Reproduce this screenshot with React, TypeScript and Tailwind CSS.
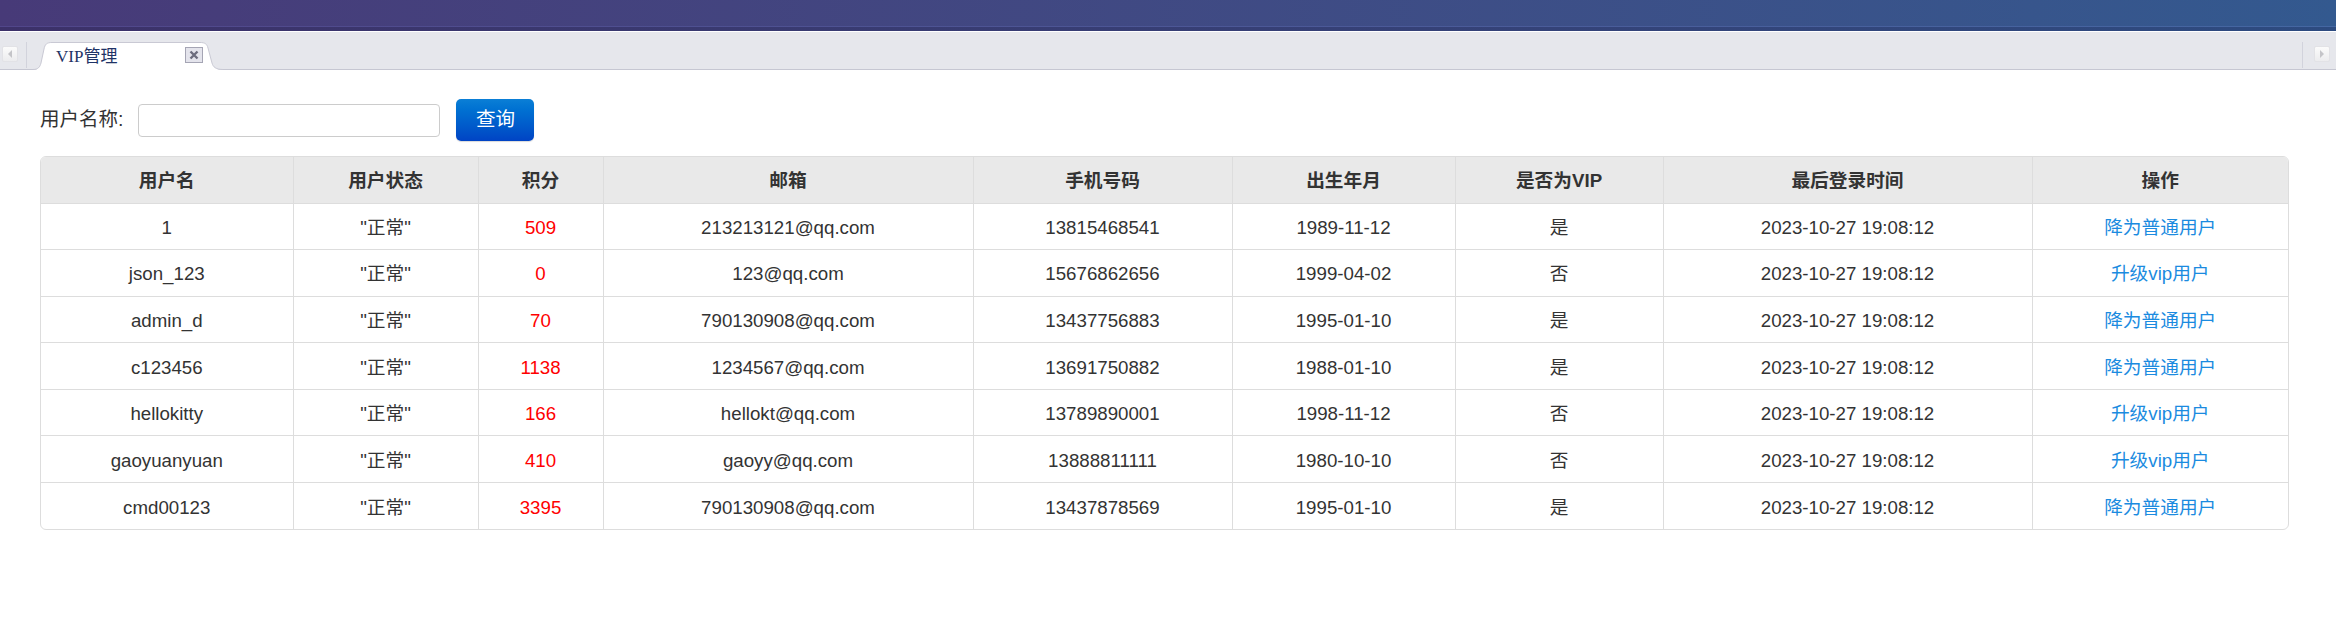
import React from "react"

interface VipUser {
  name: string
  status: string
  points: number
  email: string
  phone: string
  birth: string
  vip: boolean
  lastLogin: string
}

const users: VipUser[] = [
  { name: "1", status: "\"正常\"", points: 509, email: "213213121@qq.com", phone: "13815468541", birth: "1989-11-12", vip: true, lastLogin: "2023-10-27 19:08:12" },
  { name: "json_123", status: "\"正常\"", points: 0, email: "123@qq.com", phone: "15676862656", birth: "1999-04-02", vip: false, lastLogin: "2023-10-27 19:08:12" },
  { name: "admin_d", status: "\"正常\"", points: 70, email: "790130908@qq.com", phone: "13437756883", birth: "1995-01-10", vip: true, lastLogin: "2023-10-27 19:08:12" },
  { name: "c123456", status: "\"正常\"", points: 1138, email: "1234567@qq.com", phone: "13691750882", birth: "1988-01-10", vip: true, lastLogin: "2023-10-27 19:08:12" },
  { name: "hellokitty", status: "\"正常\"", points: 166, email: "hellokt@qq.com", phone: "13789890001", birth: "1998-11-12", vip: false, lastLogin: "2023-10-27 19:08:12" },
  { name: "gaoyuanyuan", status: "\"正常\"", points: 410, email: "gaoyy@qq.com", phone: "13888811111", birth: "1980-10-10", vip: false, lastLogin: "2023-10-27 19:08:12" },
  { name: "cmd00123", status: "\"正常\"", points: 3395, email: "790130908@qq.com", phone: "13437878569", birth: "1995-01-10", vip: true, lastLogin: "2023-10-27 19:08:12" },
]

const headers = ["用户名", "用户状态", "积分", "邮箱", "手机号码", "出生年月", "是否为VIP", "最后登录时间", "操作"]
const colWidths = [252, 185, 125, 370, 259, 223, 208, 369, 256]

function ScrollArrow({ dir }: { dir: "left" | "right" }) {
  return (
    <div className="flex h-[16px] w-[16px] items-center justify-center rounded-[2px] border border-[#e2e2e6] bg-gradient-to-b from-[#fbfbfb] to-[#ececee]">
      <svg width="8" height="10" viewBox="0 0 8 10">
        {dir === "left" ? (
          <path d="M6 1 L2 5 L6 9 Z" fill="#c4c4c8" />
        ) : (
          <path d="M2 1 L6 5 L2 9 Z" fill="#c4c4c8" />
        )}
      </svg>
    </div>
  )
}

function Tab() {
  return (
    <div className="relative -mb-px ml-[6px] flex h-[28px] w-[190px] items-center">
      <svg className="absolute inset-0" width="190" height="28" viewBox="0 0 190 28">
        <path
          d="M0 28 C5 28 7 25 8 21 L11 7 C12 2 14 0.5 19 0.5 L167 0.5 C172 0.5 174 2 175 6 L179 21 C180 25 183 28 190 28 Z"
          fill="#ffffff"
        />
        <path
          d="M0 27.5 C5 27.5 7 25 8 21 L11 7 C12 2 14 0.5 19 0.5 L167 0.5 C172 0.5 174 2 175 6 L179 21 C180 25 183 27.5 190 27.5"
          fill="none"
          stroke="#c9c9d4"
        />
      </svg>
      <span className="relative pl-[23px] pt-[1px] font-['Liberation_Serif','Noto_Sans_CJK_SC',serif] text-[17px] text-[#1f3366]">
        VIP管理
      </span>
      <div className="relative ml-auto mr-[20px] -mt-[2px] flex h-[16px] w-[18px] items-center justify-center border border-[#a5a5b4] bg-[#e4e4ec]">
        <svg width="10" height="10" viewBox="0 0 10 10">
          <path d="M1.5 1.5 L8.5 8.5 M8.5 1.5 L1.5 8.5" stroke="#6d6d7e" strokeWidth="2.4" />
        </svg>
      </div>
    </div>
  )
}

export default function App() {
  return (
    <div className="min-h-screen bg-white font-['Liberation_Sans','Noto_Sans_CJK_SC',sans-serif] text-[#333]">
      <div className="h-[26px] bg-gradient-to-r from-[#473a78] to-[#33598f]" />
      <div className="h-px bg-gradient-to-r from-[#51468a] to-[#4467a2]" />
      <div className="h-[4px] bg-gradient-to-r from-[#3c3169] to-[#2d4b80]" />
      <div className="h-px bg-white" />

      <div className="flex h-[38px] items-end border-b border-[#c6c7d2] bg-[#e6e7ec]">
        <div className="mb-[1px] flex h-[26px] w-[27px] items-center self-end border-r border-[#d2d3dc] pb-[3px] pl-[2px]">
          <ScrollArrow dir="left" />
        </div>
        <Tab />
        <div className="flex-1" />
        <div className="mb-[1px] flex h-[26px] w-[34px] items-center justify-center border-l border-[#d2d3dc] pb-[3px] pl-[4px]">
          <ScrollArrow dir="right" />
        </div>
      </div>

      <div className="pl-[40px] pr-[47px]">
        <div className="flex items-center pt-[29px]">
          <span className="text-[19.5px] text-[#333]">用户名称:</span>
          <input
            type="text"
            className="ml-[15px] h-[33px] w-[302px] rounded-[4px] border border-[#cccccc] bg-white px-2 text-[18px] outline-none"
          />
          <button className="ml-[16px] h-[42px] w-[78px] rounded-[5px] bg-gradient-to-b from-[#0b7fd6] to-[#0043c4] text-[19.5px] text-white shadow-[0_1px_1px_rgba(0,0,0,0.15)]">
            查询
          </button>
        </div>

        <div className="mt-[15px] overflow-hidden rounded-[6px] border border-[#dddddd]">
          <table className="w-full table-fixed border-collapse text-center text-[18.7px]">
            <colgroup>
              {colWidths.map((w, i) => (
                <col key={i} style={{ width: w }} />
              ))}
            </colgroup>
            <thead>
              <tr className="bg-[#e9e9e9]">
                {headers.map((h, i) => (
                  <th
                    key={h}
                    className={`h-[46px] pt-[2px] font-bold text-[#333] ${i > 0 ? "border-l border-[#dddddd]" : ""}`}
                  >
                    {h}
                  </th>
                ))}
              </tr>
            </thead>
            <tbody className="[&_td]:pt-[3px]">
              {users.map((u) => (
                <tr key={u.name} className="border-t border-[#dddddd]">
                  <td className="h-[46.6px]">{u.name}</td>
                  <td className="border-l border-[#dddddd]">{u.status}</td>
                  <td className="border-l border-[#dddddd] text-[#ff0000]">{u.points}</td>
                  <td className="border-l border-[#dddddd]">{u.email}</td>
                  <td className="border-l border-[#dddddd]">{u.phone}</td>
                  <td className="border-l border-[#dddddd]">{u.birth}</td>
                  <td className="border-l border-[#dddddd]">{u.vip ? "是" : "否"}</td>
                  <td className="border-l border-[#dddddd]">{u.lastLogin}</td>
                  <td className="border-l border-[#dddddd]">
                    <a className="cursor-pointer text-[#1b8be0]">{u.vip ? "降为普通用户" : "升级vip用户"}</a>
                  </td>
                </tr>
              ))}
            </tbody>
          </table>
        </div>
      </div>
    </div>
  )
}
